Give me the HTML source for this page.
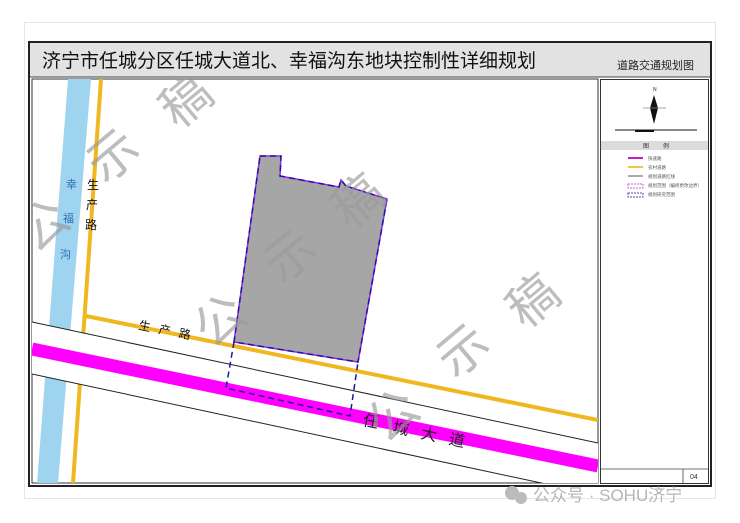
<!DOCTYPE html>
<html><head><meta charset="utf-8"><style>
html,body{margin:0;padding:0;background:#fff;}
svg{display:block;}
text{font-family:"Liberation Sans","Noto Sans CJK SC",sans-serif;}
</style></head><body>
<svg width="740" height="523" viewBox="0 0 740 523" xmlns="http://www.w3.org/2000/svg">
<rect x="0" y="0" width="740" height="523" fill="#fff"/>
<rect x="24.5" y="22.5" width="691" height="476" fill="#fff" stroke="#e6e6e6"/>
<rect x="29" y="42" width="682" height="444" fill="#fff" stroke="#222" stroke-width="2"/>
<rect x="30" y="43" width="680" height="34" fill="#e2e2e2"/>
<line x1="30" y1="77" x2="710" y2="77" stroke="#444" stroke-width="1"/>
<text x="42" y="67" font-size="19" fill="#111">济宁市任城分区任城大道北、幸福沟东地块控制性详细规划</text>
<text x="617" y="69" font-size="11" fill="#222">道路交通规划图</text>
<clipPath id="m"><rect x="32" y="79" width="566" height="404"/></clipPath>
<rect x="32" y="79" width="566" height="404" fill="#fff" stroke="#333" stroke-width="1"/>
<g clip-path="url(#m)">
<polygon points="68,79 91,79 58,483 37,483" fill="#9fd4f0"/>
<text x="66" y="188" font-size="11" fill="#2a6fb0">幸</text>
<text x="63" y="222" font-size="11" fill="#2a6fb0">福</text>
<text x="60" y="258" font-size="11" fill="#2a6fb0">沟</text>
<line x1="101" y1="79" x2="73" y2="483" stroke="#f0b820" stroke-width="4"/>
<line x1="86" y1="316" x2="598" y2="420" stroke="#f0b820" stroke-width="4"/>
<polygon points="32,322 598,443 598,495 32,374" fill="#fff"/>
<line x1="32" y1="322" x2="598" y2="443" stroke="#222" stroke-width="1"/>
<line x1="32" y1="374" x2="560" y2="487" stroke="#222" stroke-width="1"/>
<line x1="32" y1="349" x2="598" y2="466" stroke="#ff00ff" stroke-width="13"/>
<polygon points="260,156 281,156 280,176 339,187 341,180 346,186 387,199 358,362 234,342" fill="#a6a6a6" stroke="#a020f0" stroke-width="1.5"/>
<polygon points="260,156 281,156 280,176 339,187 341,180 346,186 387,199 358,362 234,342" fill="none" stroke="#1a1a9a" stroke-width="1.5" stroke-dasharray="6,4"/>
<polyline points="234,342 226,388 350,416 358,362" fill="none" stroke="#1a1a9a" stroke-width="1.5" stroke-dasharray="6,4"/>
<text x="87" y="189" font-size="12" fill="#111">生</text>
<text x="86" y="209" font-size="12" fill="#111">产</text>
<text x="85" y="229" font-size="12" fill="#111">路</text>
<g font-size="12" fill="#111">
<text transform="translate(138,329) rotate(12)">生</text>
<text transform="translate(158,333) rotate(12)">产</text>
<text transform="translate(178,337) rotate(12)">路</text>
</g>
<g font-size="16" fill="#222">
<text transform="translate(362,425) rotate(12)">任</text>
<text transform="translate(392,432) rotate(12)">城</text>
<text transform="translate(420,438) rotate(12)">大</text>
<text transform="translate(448,444) rotate(12)">道</text>
</g>
<g font-size="50" fill="#999" fill-opacity="0.65">
<text transform="translate(35,255) rotate(-40)">公</text>
<text transform="translate(105,185) rotate(-40)">示</text>
<text transform="translate(178,130) rotate(-40)">稿</text>
<text transform="translate(212,350) rotate(-40)">公</text>
<text transform="translate(282,285) rotate(-40)">示</text>
<text transform="translate(350,230) rotate(-40)">稿</text>
<text transform="translate(385,445) rotate(-40)">公</text>
<text transform="translate(455,380) rotate(-40)">示</text>
<text transform="translate(525,330) rotate(-40)">稿</text>
</g>
</g>
<rect x="600.5" y="79.5" width="108" height="404" fill="#fff" stroke="#333"/>
<text x="653" y="91" font-size="5" fill="#222">N</text>
<polygon points="654,95 650,108 654,124 658,108" fill="#111"/>
<line x1="643" y1="108" x2="666" y2="108" stroke="#888" stroke-width="0.7"/>
<line x1="615" y1="130" x2="697" y2="130" stroke="#111" stroke-width="1"/>
<line x1="635" y1="131" x2="654" y2="131" stroke="#111" stroke-width="2"/>
<rect x="601" y="141" width="107" height="9" fill="#dcdcdc"/>
<text x="643" y="148" font-size="6" fill="#333">图</text>
<text x="663" y="148" font-size="6" fill="#333">例</text>
<line x1="628" y1="158" x2="643" y2="158" stroke="#c020c0" stroke-width="2"/>
<line x1="628" y1="167" x2="643" y2="167" stroke="#f0c840" stroke-width="2"/>
<line x1="628" y1="176" x2="643" y2="176" stroke="#aaa" stroke-width="2"/>
<rect x="628" y="184" width="15" height="4" fill="none" stroke="#d060d0" stroke-dasharray="2,1"/>
<rect x="628" y="193" width="15" height="4" fill="none" stroke="#5050b0" stroke-dasharray="2,1"/>
<g font-size="4.5" fill="#555">
<text x="648" y="160">快速路</text>
<text x="648" y="169">农村道路</text>
<text x="648" y="178">规划道路红线</text>
<text x="648" y="187">规划范围（编修更改边界）</text>
<text x="648" y="196">规划研究范围</text>
</g>
<line x1="601" y1="469" x2="708" y2="469" stroke="#444" stroke-width="0.8"/>
<line x1="683" y1="469" x2="683" y2="483" stroke="#444" stroke-width="0.8"/>
<text x="690" y="479" font-size="7" fill="#333">04</text>
<circle cx="512" cy="493" r="7" fill="#bbb"/>
<circle cx="521" cy="498" r="6" fill="#bbb"/>
<text x="533" y="501" font-size="17" fill="#b5b5b5">公众号 · SOHU济宁</text>
</svg>
</body></html>
